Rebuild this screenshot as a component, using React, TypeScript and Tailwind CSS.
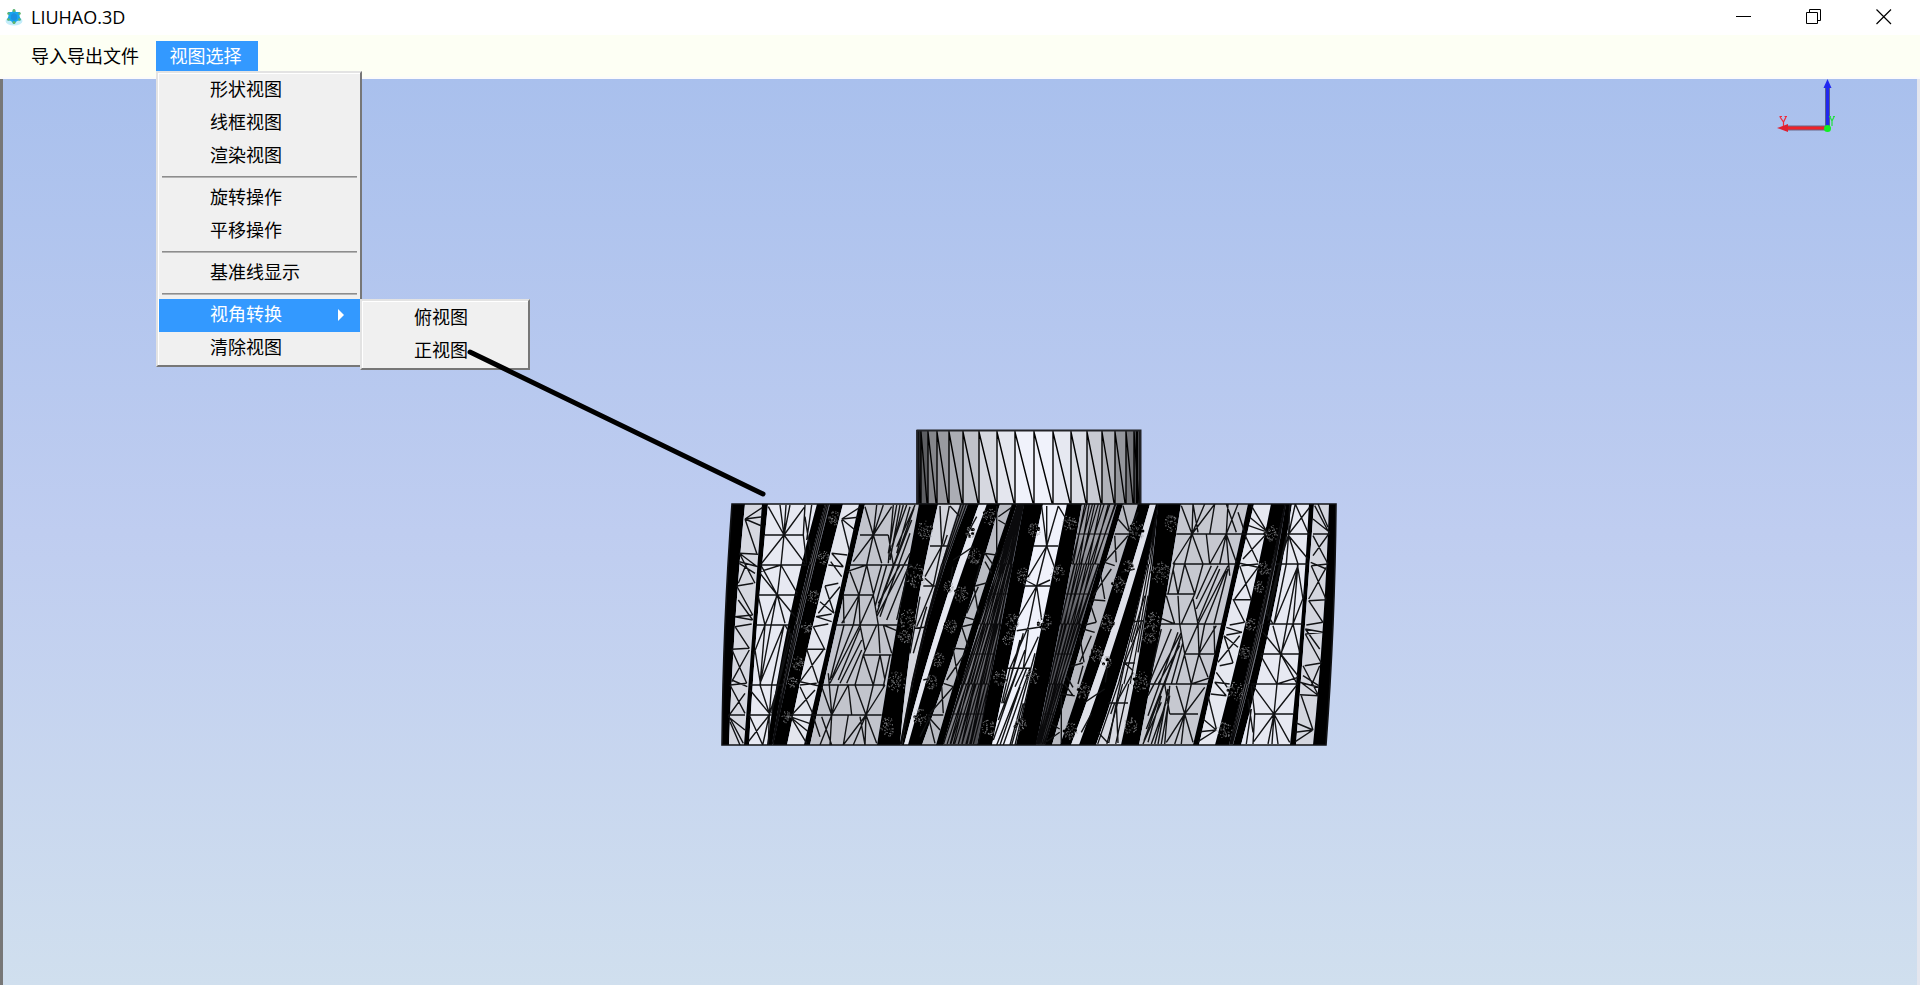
import React from "react";

type Triple = [number, number, number];

const TOP = 504;
const MID = 625;
const BOTTOM = 745;

function xAt([a, b, c]: Triple, y: number) {
  const t = (y - TOP) / (BOTTOM - TOP);
  const m = (MID - TOP) / (BOTTOM - TOP);
  const la = ((t - m) * (t - 1)) / (m * 1);
  const lb = (t * (t - 1)) / (m * (m - 1));
  const lc = (t * (t - m)) / (1 - m);
  return a * la + b * lb + c * lc;
}

function random(seed: number) {
  let s = seed * 7919 + 17;
  return () => {
    s = (s * 16807) % 2147483647;
    return s / 2147483647;
  };
}

type Kind = "plain" | "dense";
type Region = { left: Triple; right: Triple; fill: string; kind: Kind; cols: number };

const edges: Triple[] = [
  [732, 725, 722], [745, 735, 729], [762, 753, 744], [768, 757, 749], [817, 788, 767],
  [825, 795, 772], [830, 800, 773], [843, 813, 787], [859, 832, 804], [865, 837, 810],
  [919, 897, 877], [938, 914, 900], [960, 925, 900], [968, 927, 902], [979, 938, 904],
  [987, 944, 908], [1000, 963, 922], [1012, 972, 936], [1017, 979, 943], [1024, 1001, 977],
  [1043, 1017, 992], [1067, 1042, 1016], [1082, 1060, 1036], [1117, 1081, 1045], [1123, 1087, 1052],
  [1138, 1100, 1060], [1150, 1113, 1071], [1156, 1120, 1079], [1158, 1133, 1096], [1158, 1144, 1121],
  [1181, 1161, 1139], [1248, 1221, 1193], [1254, 1226, 1199], [1271, 1245, 1215], [1285, 1258, 1229],
  [1286, 1263, 1233], [1292, 1270, 1241], [1309, 1301, 1290], [1314, 1305, 1296], [1329, 1323, 1313],
  [1336, 1333, 1326],
];

const BLACK: [Kind, string] = ["plain", "#000"];
const looks: [Kind, string, number?][] = [
  BLACK, ["plain", "#d6d8e0"], BLACK, ["plain", "#e7e9f2"], BLACK,
  ["dense", "#77787e", 1], BLACK, ["plain", "#e4e6ee"], BLACK, ["plain", "#c2c4cc"],
  BLACK, ["plain", "#d4d6de"], ["dense", "#67686e", 1], BLACK, ["plain", "#e6e8f0"],
  BLACK, ["plain", "#b9bbc2"], BLACK, ["dense", "url(#shade-left)", 3], BLACK,
  ["plain", "#f0f2fb"], BLACK, ["dense", "url(#shade-right)", 2], BLACK, ["plain", "#b8bac1"],
  BLACK, ["plain", "#e0e2ea"], BLACK, ["dense", "#d8dae2", 1], BLACK,
  ["plain", "#c6c8d0"], BLACK, ["plain", "#e6e8f0"], BLACK, ["dense", "#77787e", 1],
  BLACK, ["plain", "#e7e9f2"], BLACK, ["plain", "#d4d6de"], BLACK,
];

const regions: Region[] = looks.map(([kind, fill, cols], i) => ({
  left: edges[i],
  right: edges[i + 1],
  fill,
  kind,
  cols: cols ?? 1,
}));

function outline(l: Triple, r: Triple) {
  const ys = [0, 1, 2, 3, 4, 5, 6, 7, 8].map((i) => TOP + (i * (BOTTOM - TOP)) / 8);
  const a = ys.map((y) => `${xAt(l, y).toFixed(1)},${y}`);
  const b = [...ys].reverse().map((y) => `${xAt(r, y).toFixed(1)},${y}`);
  return [...a, ...b].join(" ");
}

function hatch(region: Region, index: number) {
  const rnd = random(index + 3);
  const at = (u: number, y: number) => {
    const l = xAt(region.left, y);
    return `${(l + u * (xAt(region.right, y) - l)).toFixed(1)} ${y.toFixed(1)}`;
  };
  const seg = (u: number, y: number, v: number, z: number) => `M${at(u, y)}L${at(v, z)}`;
  const n = region.cols * 3;
  let d = "";
  for (let k = 0; k < n; k++) {
    for (let r = 0; r < 4; r++) {
      const y = TOP + r * 60;
      d += seg(k / n + rnd() * 0.15, y, k / n + rnd() * 0.15, y + 60);
      if (n > 3) d += seg((k + 0.8) / n, y, k / n, y + 60);
    }
  }
  if (n > 3) for (let r = 1; r < 8; r++) d += seg(0, TOP + r * 30, 1, TOP + r * 30);
  return d;
}

/* Mesh edges in third-of-a-unit steps; each group of four numbers is one edge. */
const leftMesh = [
  // rim strip
  105,297,158,262, 105,297,158,290, 105,297,155,318, 105,297,140,400, 88,400,145,403, 88,400,135,490, 88,400,142,440,
  88,425,145,440, 88,430,135,460, 80,498,130,490, 80,498,128,585, 110,430,85,490, 75,590,128,600, 75,590,128,585,
  75,620,125,612, 75,620,118,685, 85,540,128,600, 65,688,118,685, 65,688,110,790, 118,690,65,785, 60,795,110,790,
  65,780,112,800, 60,795,105,880, 105,820,58,885, 55,885,105,885, 55,890,105,930, 55,885,100,970, 60,905,90,975,
  // first flank
  165,345,280,345, 175,260,222,345, 210,255,222,345, 240,255,222,345, 283,262,222,345, 228,255,222,345,
  285,255,280,345, 280,345,290,430, 222,345,155,430, 222,345,213,435, 222,345,285,430, 285,290,300,390, 150,435,290,435,
  213,435,150,455, 150,460,202,525, 213,435,202,525, 213,435,262,520, 155,440,202,525, 145,525,262,525, 202,525,165,615,
  202,525,225,610, 202,525,255,590, 145,530,165,615, 135,615,240,615, 165,615,130,705, 165,615,150,795, 200,525,150,795,
  222,615,150,790, 222,615,185,795, 240,625,185,880, 245,640,205,795, 225,615,245,650, 135,690,152,795, 120,795,215,795,
  150,795,178,880, 185,795,178,885, 120,810,178,880, 205,795,178,885, 115,885,185,885, 178,885,115,965, 178,885,158,975,
  178,885,175,975, 120,890,158,975, 305,255,290,360,
  // second tooth strip
  395,297,450,262, 395,297,445,292, 395,297,435,330, 395,300,420,400, 365,400,412,405, 365,400,400,440, 355,435,400,440,
  362,425,395,470, 345,498,385,490, 345,498,372,580, 330,545,372,580, 390,500,325,580, 318,590,365,605, 318,590,365,582,
  310,620,355,612, 310,620,345,690, 290,688,342,688, 290,688,325,790, 340,690,270,785, 270,785,325,797, 270,795,320,790,
  270,800,308,880, 315,810,245,885, 240,885,300,885, 240,890,298,910, 240,890,295,935, 245,895,290,970,
  // second flank
  450,345,535,345, 465,260,490,345, 500,255,490,345, 520,255,490,345, 545,260,490,345, 550,255,535,430, 490,345,430,425,
  490,345,470,435, 490,345,515,430, 415,435,605,435, 570,255,540,420, 590,255,545,380, 600,260,560,400, 612,265,500,580,
  605,300,520,520, 600,340,510,590, 600,400,500,590, 595,440,530,600, 590,470,560,600, 535,345,550,435, 550,435,505,560,
  570,435,505,550, 515,435,490,525, 560,255,535,400, 580,255,540,410, 615,255,560,380, 530,435,495,560, 420,455,447,525,
  470,435,410,455, 470,435,447,525, 470,435,490,520, 400,525,490,525, 447,525,395,610, 447,525,450,615, 400,525,402,610,
  490,525,450,615, 490,525,505,615, 447,525,430,615, 375,615,570,615, 402,615,360,780, 430,615,365,775, 450,615,360,790,
  450,625,385,780, 455,660,390,790, 455,690,410,790, 450,615,465,690, 500,615,460,705, 505,615,510,700, 520,615,545,700,
  520,615,560,632, 460,705,545,705, 460,705,435,795, 460,705,490,795, 510,705,490,795, 510,705,525,780, 335,795,525,795,
  355,760,365,880, 385,795,365,885, 415,795,365,885, 435,795,468,885, 490,795,468,885, 525,795,468,885, 335,800,365,885,
  415,795,425,885, 300,885,515,885, 365,885,330,975, 365,885,360,975, 335,890,365,975, 310,890,330,950, 415,885,400,975,
  468,885,400,975, 468,885,430,975, 468,885,465,975, 468,885,500,970, 450,890,465,975, 540,705,520,800,
  // third tooth strips
  690,258,695,378, 718,258,695,378, 720,258,750,290, 660,378,720,378, 695,378,645,470, 695,378,670,498, 645,475,670,498,
  640,498,675,498, 670,498,620,620, 630,530,600,700, 650,560,610,700, 615,625,645,622, 700,378,712,345,
  865,290,905,262, 865,300,890,315, 860,258,860,400, 820,400,860,405, 825,400,850,435, 825,425,845,460, 795,498,832,488,
  810,435,795,490, 792,500,805,580, 805,500,770,580, 760,590,795,600, 755,620,790,612, 755,620,775,680, 728,685,770,688,
  730,690,745,780, 765,700,710,780, 700,790,730,800, 695,800,700,880, 730,800,660,880, 655,885,700,885, 655,890,675,970,
  655,890,690,930, 630,950,655,900, 730,420,790,380, 700,620,735,600, 640,780,680,770, 770,345,800,290, 720,500,728,440,
];

const centerMesh = [
  970,378,1045,378, 995,260,1010,378, 1045,258,1010,378, 1010,258,1010,378, 1045,258,1070,300, 1010,378,955,470, 1010,378,980,498,
  1010,378,1040,460, 940,498,1020,498, 980,498,920,600, 980,498,955,620, 980,498,995,600, 980,498,1020,480, 980,498,945,480,
  920,632,995,620, 890,745,965,745, 955,620,900,745, 955,630,940,745, 985,650,915,800, 940,640,880,850, 975,700,900,975,
  960,745,880,975, 950,745,860,975, 925,745,850,960, 900,745,875,850, 965,760,915,975, 940,850,905,975, 930,800,870,975,
  945,690,865,900, 930,660,900,780,
];

function toPath(list: number[]) {
  let d = "";
  for (let i = 0; i < list.length; i += 4) {
    const [a, b, c, e] = list.slice(i, i + 4);
    d += `M${(710 + a / 3).toFixed(1)} ${(420 + b / 3).toFixed(1)}L${(710 + c / 3).toFixed(1)} ${(420 + e / 3).toFixed(1)}`;
  }
  return d;
}

const speckles: [number, number, number][] = [
  [834, 518, 6], [823, 557, 6], [813, 597, 6], [806, 627, 5], [798, 663, 6], [792, 682, 5], [786, 717, 5],
  [925, 530, 8], [915, 576, 10], [908, 620, 9], [904, 636, 7], [896, 682, 9], [888, 727, 8],
  [989, 517, 7], [974, 556, 7], [961, 594, 7], [950, 626, 6], [938, 660, 6], [931, 682, 6], [920, 717, 7], [970, 532, 5], [948, 587, 5],
  [1034, 530, 6], [1023, 576, 7], [1012, 622, 7], [1008, 638, 6], [1000, 678, 7], [988, 728, 7],
  [1069, 523, 7], [1057, 573, 7], [1044, 622, 7], [1032, 676, 7], [1020, 725, 6],
  [1136, 531, 8], [1118, 585, 7], [1107, 623, 7], [1096, 654, 7], [1083, 691, 7], [1070, 731, 7], [1128, 566, 5], [1106, 662, 5],
  [1171, 523, 7], [1160, 573, 10], [1152, 620, 7], [1149, 634, 8], [1139, 681, 9], [1130, 726, 7],
  [1271, 533, 7], [1264, 568, 6], [1259, 587, 5], [1250, 624, 6], [1244, 652, 6], [1235, 691, 8], [1224, 730, 7],
];

function blots([cx, cy, r]: [number, number, number], i: number) {
  const rnd = random(i + 90);
  let d = "";
  for (let k = 0; k < 6; k++) {
    const a = rnd() * 6.283;
    const q = r * (0.4 + rnd() * 0.5);
    d += `M${(cx + Math.cos(a) * q).toFixed(1)} ${(cy + Math.sin(a) * q).toFixed(1)}h0.1`;
  }
  return d;
}

function specks([cx, cy, r]: [number, number, number], i: number) {
  const rnd = random(i + 40);
  let d = "";
  for (let k = 0; k < r * 7; k++) {
    const a = rnd() * 6.283;
    const q = Math.sqrt(rnd()) * r;
    d += `M${(cx + Math.cos(a) * q).toFixed(1)} ${(cy + Math.sin(a) * q * 1.2).toFixed(1)}h1`;
  }
  return d;
}

const shaftLines = [917, 921, 928, 937, 949, 963, 979, 997, 1015, 1034, 1053, 1071, 1087, 1102, 1115, 1126, 1134, 1140];
const shaftFills = [
  "#26272a", "#5d5e62", "#85868b", "#999aa0", "#abadb4", "#c0c2ca", "#d6d8e0", "#e4e6ee", "#f0f2fb",
  "#f0f2fb", "#e6e8f1", "#dbdde5", "#c9cbd3", "#b0b2b9", "#94969c", "#75767b", "#45464a",
];

function GearModel() {
  return (
    <svg className="absolute top-[349px] left-[720px] h-[320px] w-[620px]" viewBox="720 428 620 320" role="img" aria-label="Gear">
      <defs>
        <clipPath id="gear-body">
          <polygon points={outline(edges[0], edges[40])} />
        </clipPath>
        <linearGradient id="shade-left" gradientUnits="userSpaceOnUse" x1={970} y1={655} x2={1015} y2={670}>
          <stop offset={0} stopColor="#8c8d93" />
          <stop offset={0.9} stopColor="#38383c" />
        </linearGradient>
        <linearGradient id="shade-right" gradientUnits="userSpaceOnUse" x1={1060} y1={620} x2={1105} y2={550}>
          <stop offset={0} stopColor="#56575c" />
          <stop offset={1} stopColor="#9c9da4" />
        </linearGradient>
      </defs>
      {shaftFills.map((fill, i) => (
        <rect key={i} x={shaftLines[i]} y={430} width={shaftLines[i + 1] - shaftLines[i]} height={75} fill={fill} />
      ))}
      <path
        d={shaftLines.map((x, i) => `M${x} 430V504` + (i < 17 ? `M${x} 432L${shaftLines[i + 1] - 1} 503` : "")).join("")}
        stroke="#000"
        strokeWidth={1.4}
        fill="none"
      />
      <path d="M918 431V504M1137 431V504" stroke="#000" strokeWidth={2} />
      <rect x={917.5} y={430.5} width={223} height={74} fill="none" stroke="#222327" strokeWidth={2} />
      <g clipPath="url(#gear-body)">
        {regions.map((r, i) => (
          <polygon key={i} points={outline(r.left, r.right)} fill={r.fill} />
        ))}
        {regions.map((r, i) =>
          r.kind === "dense" ? <path key={i} d={hatch(r, i)} stroke="#0a0a0c" strokeWidth={1.2} fill="none" /> : null,
        )}
        <g stroke="#111214" strokeWidth={1.4} fill="none">
          <path d={toPath(leftMesh)} />
          <path d={toPath(leftMesh)} transform="rotate(180 1029 624.5)" />
          <path d={toPath(centerMesh)} />
        </g>
        <path d={speckles.map(blots).join("")} stroke="#000" strokeWidth={3} strokeLinecap="round" fill="none" />
        <path d={speckles.map(specks).join("")} stroke="#94959a" strokeWidth={0.7} fill="none" />
      </g>
      <polygon points={outline(edges[0], edges[40])} fill="none" stroke="#111214" strokeWidth={1.6} />
    </svg>
  );
}

function AxisTriad() {
  return (
    <svg className="absolute top-0 right-[82px] h-[56px] w-[60px]" viewBox="0 0 60 56" role="img" aria-label="Axes">
      <path d="M52.500 8V48" stroke="#55608c" strokeWidth={5} />
      <path d="M10 49H51" stroke="#6c6484" strokeWidth={5} />
      <path d="M52.500 4V48" stroke="#2228f0" strokeWidth={3} />
      <path d="M52.500 0L56.500 9H48.500Z" fill="#2228f0" />
      <path d="M10 49H51" stroke="#f02228" strokeWidth={3} />
      <path d="M2 49L13 45V53Z" fill="#e02030" />
      <path d="M4.500 37.500H7M9.500 37.500H12M5 38L8.500 43L11 38M8.500 43V47" stroke="#f02838" strokeWidth={1.2} fill="none" />
      <path d="M54 37.500H56M58 37.500H60M55 38L57 42L59 38M57 42V47" stroke="#22e040" strokeWidth={1.2} fill="none" />
      <circle cx={52.500} cy={49.500} r={3.500} fill="#12f022" />
    </svg>
  );
}

function AppIcon() {
  return (
    <svg className="size-[18px]" viewBox="0 0 18 18" aria-hidden="true">
      <ellipse cx={9} cy={13} rx={8.500} ry={4.500} fill="#c4edfa" />
      <path d="M9 1L11 4L15 4L14.500 8L16 12L12 13L9 16L6 13L2 12L3.500 8L3 4L7 4Z" fill="#16a5ee" />
      <path d="M9 5L12 7V11L9 13L6 11V7Z" fill="#1a8fe0" />
      <g fill="#62b56c">
        <circle cx={9} cy={2.500} r={1.500} />
        <circle cx={3.500} cy={5.500} r={1.300} />
        <circle cx={14.500} cy={5.500} r={1.300} />
        <circle cx={3.500} cy={11.500} r={1.300} />
        <circle cx={14.500} cy={11.500} r={1.300} />
        <circle cx={9} cy={14.500} r={1.500} />
      </g>
    </svg>
  );
}

const popup =
  "absolute flex flex-col border-2 border-t-[#e3e3e3] border-l-[#e3e3e3] border-r-[#777] border-b-[#777] bg-[#f0f0f0] pt-px pl-px shadow-[inset_1px_1px_0_#fff]";

function MenuItem({ label, active = false }: { label: string; active?: boolean }) {
  return (
    <button
      type="button"
      role="menuitem"
      aria-haspopup={active ? "menu" : undefined}
      className={
        active
          ? "flex h-[33px] items-center justify-between bg-[#3399ff] pr-4 pb-[2px] pl-[51px] text-left text-white"
          : "flex h-[33px] items-center pb-[2px] pl-[51px] text-left"
      }
    >
      {label}
      {active && (
        <svg className="h-3 w-[6px]" viewBox="0 0 6 12" aria-hidden="true">
          <path d="M0 0L6 6L0 12Z" fill="#fff" />
        </svg>
      )}
    </button>
  );
}

function Separator() {
  return (
    <div role="separator" className="flex h-[9px] items-start px-[3px] pt-[3px]">
      <div className="h-[2px] w-full border-t border-[#8d8d8d] bg-[#b4b4b4]" />
    </div>
  );
}

export default function App() {
  return (
    <div className="flex min-h-screen flex-col bg-white font-['Liberation_Sans','Noto_Sans_CJK_SC',sans-serif] text-lg text-black">
      <header className="flex h-[35px] items-center justify-between pr-[28px] pb-[2px] pl-[5px]">
        <div className="flex items-center gap-2">
          <AppIcon />
          <h1 className="font-['Open_Sans',sans-serif] text-lg leading-6">LIUHAO.3D</h1>
        </div>
        <div className="flex items-center gap-[54px]">
          <button type="button" aria-label="Minimize">
            <svg className="size-4" viewBox="0 0 16 16" fill="none" stroke="#000">
              <path d="M0 7.500H15" />
            </svg>
          </button>
          <button type="button" aria-label="Restore">
            <svg className="size-4" viewBox="0 0 16 16" fill="none" stroke="#000">
              <path d="M.5 3.500H11.500V14.500H.5ZM3.500 3.500V.5H14.500V11.500H11.500" />
            </svg>
          </button>
          <button type="button" aria-label="Close">
            <svg className="size-4" viewBox="0 0 16 16" fill="none" stroke="#000" strokeWidth={1.2}>
              <path d="M.5 .5L15 15M15 .5L.5 15" />
            </svg>
          </button>
        </div>
      </header>

      <nav className="flex h-[44px] items-start border-b-2 border-[#fbfbfb] bg-[#fdfff4] pt-[6px] pl-[18px]">
        <button type="button" className="h-[30px] w-[138px] pt-[2px] pl-[13px] text-left whitespace-nowrap">
          导入导出文件
        </button>
        <div className="relative z-10">
          <button type="button" aria-expanded="true" className="h-[30px] w-[102px] bg-[#3399ff] pt-[2px] pr-[3px] text-center text-white">
            视图选择
          </button>
          <div role="menu" className={`${popup} top-[30px] left-0 w-[206px]`}>
            <MenuItem label="形状视图" />
            <MenuItem label="线框视图" />
            <MenuItem label="渲染视图" />
            <Separator />
            <MenuItem label="旋转操作" />
            <MenuItem label="平移操作" />
            <Separator />
            <MenuItem label="基准线显示" />
            <Separator />
            <MenuItem label="视角转换" active />
            <MenuItem label="清除视图" />
            <div role="menu" className={`${popup} top-[226px] left-[202px] w-[170px]`}>
              <MenuItem label="俯视图" />
              <MenuItem label="正视图" />
            </div>
          </div>
        </div>
      </nav>

      <main className="relative flex-1 border-r-[3px] border-l-[3px] border-r-[#e4e6ee] border-l-[#777] bg-linear-to-b from-[#a9c0ed] via-[#bfcdf0] to-[#d0dfee]">
        <div className="absolute inset-y-0 -left-[3px]">
          <GearModel />
        </div>
        <svg className="absolute top-[268px] left-[462px] z-20 h-[152px] w-[304px]" viewBox="465 347 304 152" aria-hidden="true">
          <path d="M470 352L763 494" stroke="#000" strokeWidth={5} strokeLinecap="round" />
        </svg>
        <AxisTriad />
      </main>
    </div>
  );
}
